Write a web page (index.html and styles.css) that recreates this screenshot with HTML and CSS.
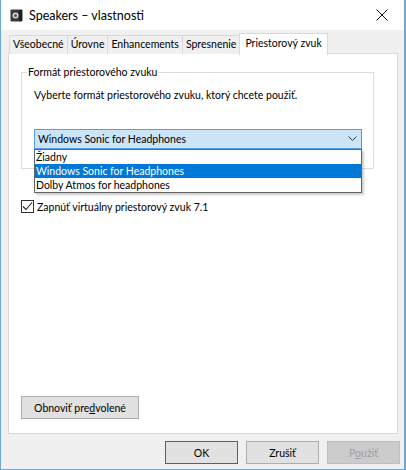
FILE: index.html
```html
<!DOCTYPE html>
<html lang="sk">
<head>
    <meta charset="UTF-8">
    <title>Speakers – vlastnosti</title>
    <link rel="stylesheet" href="styles.css">
</head>
<body>
    <div class="window">
        <div class="titlebar">
            <svg class="app-icon" width="13" height="13" viewBox="0 0 13 13">
                <rect x="0.5" y="0.5" width="12" height="12" rx="1" fill="#3a3a3a"/>
                <rect x="9" y="1" width="3" height="11" fill="#1e1e1e"/>
                <circle cx="5.5" cy="6.5" r="3" fill="#d8d8d8"/>
                <circle cx="5.5" cy="6.5" r="1.5" fill="#555"/>
            </svg>
            <span class="title">Speakers – vlastnosti</span>
            <svg class="close" width="12" height="12" viewBox="0 0 12 12">
                <path d="M0.5 0.5 L11.5 11.5 M11.5 0.5 L0.5 11.5" stroke="#111" stroke-width="1"/>
            </svg>
        </div>

        <div class="content">
            <div class="tabs">
                <div class="tab">Všeobecné</div>
                <div class="tab">Úrovne</div>
                <div class="tab">Enhancements</div>
                <div class="tab">Spresnenie</div>
                <div class="tab active">Priestorový zvuk</div>
            </div>

            <div class="panel">
                <div class="group">
                    <span class="group-title">Formát priestorového zvuku</span>
                    <p class="hint">Vyberte formát priestorového zvuku, ktorý chcete použiť.</p>
                    <div class="combo">
                        <div class="combo-box">
                            <span>Windows Sonic for Headphones</span>
                            <svg width="9" height="6" viewBox="0 0 9 6">
                                <path d="M0.5 0.5 L4.5 4.5 L8.5 0.5" fill="none" stroke="#333" stroke-width="1"/>
                            </svg>
                        </div>
                        <ul class="combo-list">
                            <li>Žiadny</li>
                            <li class="selected">Windows Sonic for Headphones</li>
                            <li>Dolby Atmos for headphones</li>
                        </ul>
                    </div>
                </div>

                <label class="check">
                    <span class="box">
                        <svg width="11" height="11" viewBox="0 0 11 11">
                            <path d="M1 5.5 L4 8.5 L10 1.5" fill="none" stroke="#222" stroke-width="1.1"/>
                        </svg>
                    </span>
                    Zapnúť virtuálny priestorový zvuk 7.1
                </label>

                <div class="spacer"></div>

                <button class="btn reset">Obnoviť pre<u>d</u>volené</button>
            </div>

            <div class="footer">
                <button class="btn default">OK</button>
                <button class="btn">Zrušiť</button>
                <button class="btn disabled">P<u>o</u>užiť</button>
            </div>
        </div>
    </div>
</body>
</html>
```

FILE: styles.css
```css
body {
    margin: 0;
    font-family: "Segoe UI", Lato, sans-serif;
    font-size: 10.5px;
    color: #000;
    background: #fff;
}
.window {
    width: 403px;
    height: 469px;
    border-left: 1px solid #6fa7d6;
    border-right: 2px solid #6fa7d6;
    border-bottom: 1px solid #6fa7d6;
    display: flex;
    flex-direction: column;
    background: #f0f0f0;
}
.titlebar {
    height: 30px;
    flex-shrink: 0;
    background: #fff;
    display: flex;
    align-items: center;
    padding: 0 0 0 9px;
}
.app-icon {
    margin-right: 6px;
}
.title {
    font-size: 12.5px;
    flex: 1;
}
.close {
    margin-right: 16px;
}
.content {
    flex: 1;
    display: flex;
    flex-direction: column;
    padding: 3px 6px 0 7px;
}
.tabs {
    display: flex;
    height: 20px;
    padding-left: 1px;
    position: relative;
    z-index: 1;
}
.tab {
    margin-top: 2px;
    height: 18px;
    padding: 0 3px;
    line-height: 17px;
    border: 1px solid #d9d9d9;
    border-bottom: none;
    border-right: none;
    background: #f0f0f0;
}
.tab.active {
    margin-top: 0;
    height: 21px;
    line-height: 19px;
    padding: 0 5px;
    background: #fff;
    border-right: 1px solid #d9d9d9;
}
.panel {
    height: 379px;
    background: #fff;
    border: 1px solid #d9d9d9;
    display: flex;
    flex-direction: column;
    padding: 0 23px 0 12px;
}
.group {
    margin-top: 18px;
    height: 95px;
    padding: 0 0 0 12px;
    border: 1px solid #dcdcdc;
}
.group-title {
    display: table;
    margin: -8px 0 0 -7px;
    padding: 0 1px;
    line-height: 14px;
    background: #fff;
}
.hint {
    margin: 9px 0 0;
    line-height: 15px;
}
.combo {
    position: relative;
    margin-top: 26px;
    width: 328px;
}
.combo-box {
    height: 18px;
    border: 1px solid #569de5;
    background: #cce4f7;
    display: flex;
    align-items: center;
    justify-content: space-between;
    padding: 0 4px 0 3px;
}
.combo-list {
    position: absolute;
    left: 0;
    top: 20px;
    width: 326px;
    margin: 0;
    padding: 0;
    list-style: none;
    background: #fff;
    border: 1px solid #646464;
    box-shadow: 2px 2px 2px rgba(0, 0, 0, 0.2);
}
.combo-list li {
    height: 14px;
    line-height: 14px;
    padding-left: 1px;
}
.combo-list li.selected {
    background: #0078d7;
    color: #fff;
}
.check {
    display: flex;
    align-items: center;
    margin-top: 31px;
}
.box {
    width: 11px;
    height: 11px;
    border: 1px solid #333;
    margin-right: 3px;
    display: flex;
}
.spacer {
    flex: 1;
}
.btn {
    font-family: inherit;
    font-size: 10.5px;
    height: 23px;
    background: #e1e1e1;
    border: 1px solid #adadad;
    padding: 0;
}
.reset {
    width: 118px;
    align-self: flex-start;
    margin-bottom: 14px;
}
.footer {
    display: flex;
    justify-content: flex-end;
    gap: 8px;
    padding: 7px 0 0;
    margin-right: -2px;
}
.footer .btn {
    width: 73px;
}
.btn.default {
    border: 1px solid #0078d7;
}
.btn.disabled {
    color: #a0a0a0;
    background: #ccc;
    border-color: #bfbfbf;
}
```
